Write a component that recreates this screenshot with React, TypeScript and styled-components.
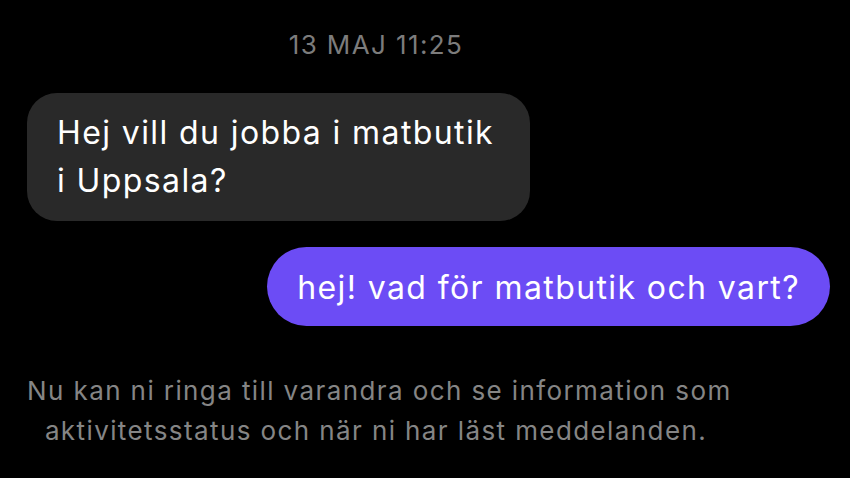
import React from 'react';
import styled, { createGlobalStyle } from 'styled-components';

type Message = {
  id: number;
  fromMe: boolean;
  text: string;
};

const messages: Message[] = [
  { id: 1, fromMe: false, text: 'Hej vill du jobba i matbutik i Uppsala?' },
  { id: 2, fromMe: true, text: 'hej! vad för matbutik och vart?' },
];

const noticeLines = [
  'Nu kan ni ringa till varandra och se information som',
  'aktivitetsstatus och när ni har läst meddelanden.',
];

/**
 * A single chat thread, dark mode
 */
function App() {
  return (
    <>
      <GlobalStyle />
      <Thread>
        <Timestamp>13 MAJ 11:25</Timestamp>

        <Messages>
          {messages.map((m) => (
            <Bubble key={m.id} $fromMe={m.fromMe}>
              {m.text}
            </Bubble>
          ))}
        </Messages>

        <Notice>
          {noticeLines.map((line) => (
            <NoticeLine key={line}>{line}</NoticeLine>
          ))}
        </Notice>
      </Thread>
    </>
  );
}

export default App;

const GlobalStyle = createGlobalStyle`
  html, body {
    margin: 0;
    background: #000;
  }

  body {
    font-family: Inter, 'Liberation Sans', sans-serif;
    letter-spacing: 1.4px;
    -webkit-font-smoothing: antialiased;
  }
`;

const Thread = styled.main`
  display: flex;
  flex-direction: column;

  width: 850px;
  height: 478px;
  box-sizing: border-box;
  padding: 29px 20px 0 27px;
  overflow: hidden;
`;

const Timestamp = styled.div`
  width: 698px;
  color: #7c7c7c;
  font-size: 26px;
  line-height: 32px;
  text-align: center;
`;

const Messages = styled.div`
  display: flex;
  flex-direction: column;
  gap: 26px;

  margin-top: 32px;
`;

const Bubble = styled.div<{ $fromMe: boolean }>`
  align-self: ${({ $fromMe }) => ($fromMe ? 'flex-end' : 'flex-start')};
  box-sizing: border-box;
  max-width: ${({ $fromMe }) => ($fromMe ? 'none' : '503px')};
  padding: ${({ $fromMe }) => ($fromMe ? '17px 30px 14px' : '16px 30px')};

  background: ${({ $fromMe }) => ($fromMe ? '#6c4cf5' : '#292929')};
  border-radius: ${({ $fromMe }) => ($fromMe ? '40px' : '30px')};
  color: #fff;
  font-size: 32px;
  line-height: 48px;
  white-space: ${({ $fromMe }) => ($fromMe ? 'nowrap' : 'normal')};
`;

const Notice = styled.div`
  width: 698px;
  margin-top: 45px;

  color: #858585;
  font-size: 26px;
  line-height: 40px;
  text-align: center;
`;

const NoticeLine = styled.div`
  white-space: nowrap;
`;
